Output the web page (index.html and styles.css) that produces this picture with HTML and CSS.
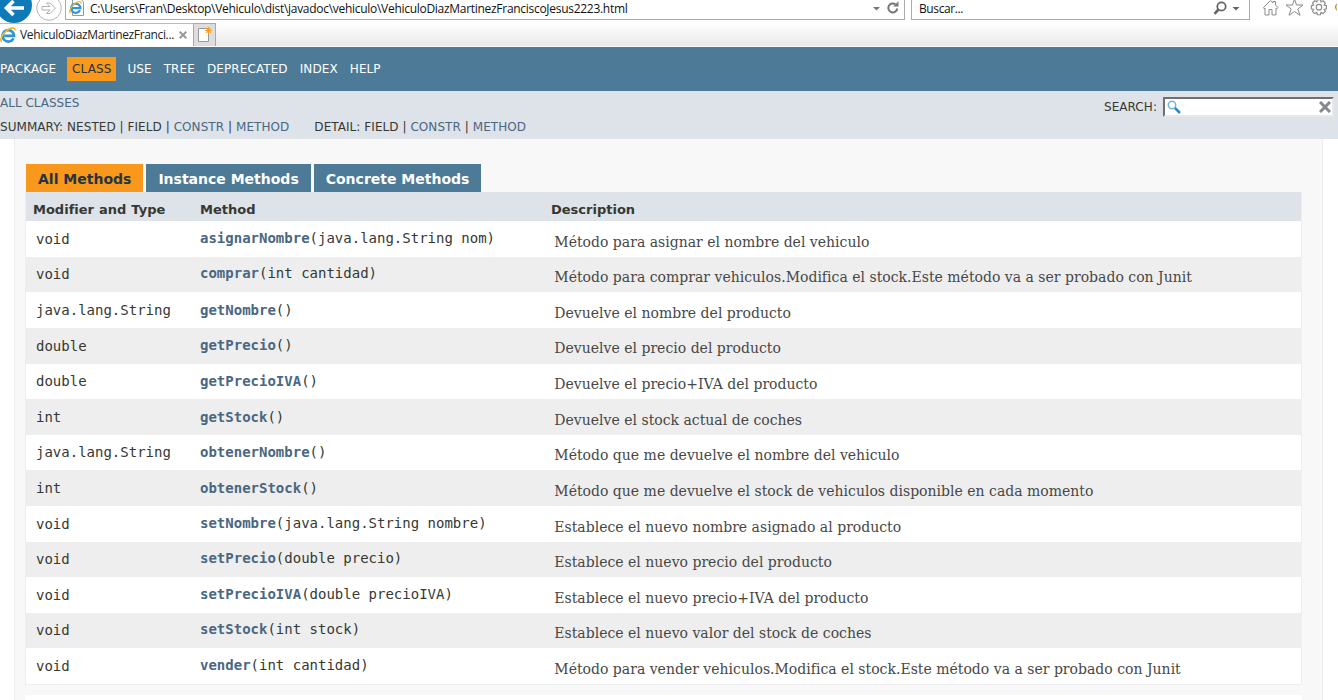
FILE: index.html
```
<!DOCTYPE html>
<html lang="es">
<head>
<meta charset="utf-8">
<title>VehiculoDiazMartinezFranciscoJesus2223</title>
<link rel="stylesheet" href="styles.css">
</head>
<body>
<svg class="defs" width="0" height="0">
  <symbol id="ie" viewBox="0 0 16 16">
    <path d="M13.5 11.200A5.700 5.700 0 1 1 14 8.800H4.200" fill="none" stroke="#2f94d8" stroke-width="2.7"/>
    <path d="M1.800 14.800C-.8 13 2.300 7 6.500 3.600 10.800.2 15.500-.3 14.800 3.500" fill="none" stroke="#f2b92d" stroke-width="1.600"/>
  </symbol>
</svg>
<div class="toolbar">
  <svg class="back" width="33" height="24" viewBox="0 0 33 24"><circle cx="14" cy="5" r="18" fill="#0e7bb8"/><path d="M24 8H7M13.500 1L6.500 8l7 7" fill="none" stroke="#fff" stroke-width="3.600"/></svg>
  <svg class="forward" width="28" height="22" viewBox="0 0 28 22"><circle cx="14" cy="8" r="12.300" fill="#fff" stroke="#b5b5b5"/><path d="M7 6.500h8L11.500 3h3.500l5.500 5-5.500 5.500h-3.500L15 10H7z" fill="#fff" stroke="#b0b0b0"/></svg>
  <div class="address">
    <svg width="18" height="18" viewBox="0 0 18 18"><path d="M4.500-1h8l3 3v13.500h-11z" fill="#fff" stroke="#999"/><use href="#ie" x="1" y="1" width="13" height="13"/></svg>
    <span class="url">C:\Users\Fran\Desktop\Vehiculo\dist\javadoc\vehiculo\VehiculoDiazMartinezFranciscoJesus2223.html</span>
    <svg class="reload" width="30" height="19" viewBox="0 0 30 19"><path d="M0 7h7L3.500 10.500z" fill="#777"/><path d="M22.500 4.300A4.500 4.500 0 1 0 24.300 8.500" fill="none" stroke="#777" stroke-width="2"/><path d="M20.500 1.200V6.500h5.300z" transform="rotate(-90 23 4)" fill="#777"/></svg>
  </div>
  <div class="searchbar"><span class="buscar">Buscar...</span>
    <svg width="28" height="19" viewBox="0 0 28 19"><circle cx="8.500" cy="6.500" r="4.200" fill="none" stroke="#666" stroke-width="1.800"/><path d="M5.500 9.500L1.500 13.800" stroke="#666" stroke-width="2.600"/><path d="M19.500 7h7l-3.500 3.500z" fill="#666"/></svg>
  </div>
  <svg class="tools" width="76" height="18" viewBox="0 0 76 18" fill="#fff" stroke="#8b8b8b"><path d="M2.500 7.500L9.500.5l2.500 2.300V1.500h2.500V5l2.500 2.500-1 1.200-1-.8v7h-4V9.500h-3v5.500h-4V8l-1 .7z"/><path d="M33.500-1l2 6h6.500l-5.200 4 2.200 6.300-5.500-3.800-5.500 3.800 2.200-6.300-5.200-4h6.500z"/><g transform="translate(-8.500 -.9) scale(1.150)"><path d="M56.400.6l2.700-.1.500 2 1.800-1 1.900 1.900-1 1.800 2 .5v2.700l-2 .5 1 1.800-1.900 1.900-1.800-1-.5 2h-2.700l-.5-2-1.800 1-1.900-1.900 1-1.800-2-.5V5.700l2-.5-1-1.800 1.900-1.900 1.800 1z"/><circle cx="57.800" cy="7" r="2.400"/></g><circle cx="79" cy="7" r="4.500" fill="#f8df63"/></svg>
</div>
<div class="tabbar">
  <div class="tab"><svg width="16" height="16"><use href="#ie" width="16" height="16"/></svg><span class="tabtitle">VehiculoDiazMartinezFranci...</span><svg class="close" width="8" height="8" viewBox="0 0 8 8"><path d="M.7.7l6.600 6.600M7.300.7L.7 7.300" stroke="#999" stroke-width="2"/></svg></div>
  <div class="newtab"><svg width="21" height="23" viewBox="0 0 21 23"><path d="M4.500 4.500h10v13h-10z" fill="#fff" stroke="#999"/><path d="M14.500 3v7M11 6.500h7M12.200 4.200l4.600 4.600M16.800 4.200l-4.600 4.600" stroke="#f6a027" stroke-width="1.200"/></svg></div>
</div>
<nav class="topnav"><span>PACKAGE</span><span class="current">CLASS</span><span>USE</span><span>TREE</span><span>DEPRECATED</span><span>INDEX</span><span>HELP</span></nav>
<div class="subnav">
  <div class="links">
    <div class="all"><a>ALL CLASSES</a></div>
    <div class="lists"><span class="summary">SUMMARY: NESTED | FIELD | <a>CONSTR</a> | <a>METHOD</a></span><span>DETAIL: FIELD | <a>CONSTR</a> | <a>METHOD</a></span></div>
  </div>
  <div class="search"><span>SEARCH:</span>
    <div class="field"><svg width="14" height="14" viewBox="0 0 14 14"><circle cx="5" cy="5" r="3.700" fill="#fff" stroke="#6fb7dc" stroke-width="1.500"/><path d="M8 8l5 5" stroke="#2589c5" stroke-width="2.500"/></svg><svg width="12" height="12" viewBox="0 0 12 12"><path d="M1 1l10 10M11 1L1 11" stroke="#828a90" stroke-width="3"/></svg></div>
  </div>
</div>
<main class="content">
  <div class="filters"><span class="active">All Methods</span><span>Instance Methods</span><span>Concrete Methods</span></div>
  <div class="table">
    <div class="head"><span>Modifier and Type</span><span>Method</span><span>Description</span></div>
    <div class="row"><code>void</code><code><b>asignarNombre</b>(java.lang.String nom)</code><p>Método para asignar el nombre del vehiculo</p></div>
    <div class="row"><code>void</code><code><b>comprar</b>(int cantidad)</code><p>Método para comprar vehiculos.Modifica el stock.Este método va a ser probado con Junit</p></div>
    <div class="row"><code>java.lang.String</code><code><b>getNombre</b>()</code><p>Devuelve el nombre del producto</p></div>
    <div class="row"><code>double</code><code><b>getPrecio</b>()</code><p>Devuelve el precio del producto</p></div>
    <div class="row"><code>double</code><code><b>getPrecioIVA</b>()</code><p>Devuelve el precio+IVA del producto</p></div>
    <div class="row"><code>int</code><code><b>getStock</b>()</code><p>Devuelve el stock actual de coches</p></div>
    <div class="row"><code>java.lang.String</code><code><b>obtenerNombre</b>()</code><p>Método que me devuelve el nombre del vehiculo</p></div>
    <div class="row"><code>int</code><code><b>obtenerStock</b>()</code><p>Método que me devuelve el stock de vehiculos disponible en cada momento</p></div>
    <div class="row"><code>void</code><code><b>setNombre</b>(java.lang.String nombre)</code><p>Establece el nuevo nombre asignado al producto</p></div>
    <div class="row"><code>void</code><code><b>setPrecio</b>(double precio)</code><p>Establece el nuevo precio del producto</p></div>
    <div class="row"><code>void</code><code><b>setPrecioIVA</b>(double precioIVA)</code><p>Establece el nuevo precio+IVA del producto</p></div>
    <div class="row"><code>void</code><code><b>setStock</b>(int stock)</code><p>Establece el nuevo valor del stock de coches</p></div>
    <div class="row"><code>void</code><code><b>vender</b>(int cantidad)</code><p>Método para vender vehiculos.Modifica el stock.Este método va a ser probado con Junit</p></div>
  </div>
  <div class="nextblock"></div>
</main>
</body>
</html>
```

FILE: styles.css
```
* { box-sizing: border-box; }
body { margin: 0; width: 1338px; height: 700px; overflow: hidden; background: #fff; color: #353833; font: 12px/16px "DejaVu Sans", sans-serif; display: flex; flex-direction: column; }
svg { display: block; flex: none; }
.defs { position: absolute; }
.toolbar { height: 23px; display: flex; flex: none; align-items: flex-start; font-family: "Open Sans", "Noto Sans", sans-serif; color: #111; z-index: 1; }
.forward { margin-left: 2px; }
.address { margin-left: 2px; width: 840px; height: 20px; border: 1px solid #aaa; border-top: 0; display: flex; background: #fff; }
.address > svg:first-child { margin-left: 2px; }
.url { margin-left: 4px; width: 783px; white-space: nowrap; letter-spacing: -0.288px; line-height: 17px; }
.searchbar { margin-left: 6px; width: 339px; height: 20px; border: 1px solid #aaa; border-top: 0; display: flex; justify-content: space-between; padding: 0 8px 0 7px; }
.buscar { line-height: 17px; letter-spacing: -0.4px; }
.tools { margin-left: 11px; }
.tabbar { height: 24px; flex: none; display: flex; background: linear-gradient(#fff, #e9e9e9); font-family: "Open Sans", "Noto Sans", sans-serif; color: #222; border-bottom: 1px solid #fafafa; }
.tab { width: 193px; display: flex; align-items: center; background: #fff; border-top: 1px solid #bbb; }
.tabtitle { margin-left: 4px; width: 159px; white-space: nowrap; letter-spacing: -0.36px; }
.newtab { width: 23px; background: #ddd; border: 1px solid #aaa; border-bottom: 0; }
.topnav { height: 44px; flex: none; background: #4d7a97; color: #fff; display: flex; align-items: center; gap: 12px; letter-spacing: 0.1px; }
.topnav .current { background: #f8981d; color: #253441; padding: 4px 5px; margin: 0 -1px; height: 24px; }
.subnav { height: 48px; flex: none; background: #dee3e9; display: flex; justify-content: space-between; }
a { color: #4a6782; }
.all { padding-top: 4px; height: 28px; }
.lists { display: flex; gap: 25px; white-space: nowrap; letter-spacing: 0.06px; }
.search { display: flex; gap: 6px; padding: 5px 4px 0 0; line-height: 22px; letter-spacing: 0.06px; }
.field { width: 171px; height: 20px; margin-top: 0.6px; background: #fff; border: 2px solid #707070; border-right-color: #e8e8e8; border-bottom-color: #e8e8e8; display: flex; justify-content: space-between; align-items: center; padding: 0 1px 0 2px; }
.content { margin: 0 15px 0 14px; height: 561px; background: #f8f8f8; border: solid #ededed; border-width: 0 1px; padding: 25px 20px 0 10px; }
.filters { display: flex; gap: 3px; height: 28px; padding-left: 1px; font-weight: bold; font-size: 14px; line-height: 30px; color: #fff; }
.filters span { background: #4d7a97; padding: 0 12px; }
.filters .active { background: #f8981d; color: #253441; }
.table { border: 1px solid #eee; border-top: 0; height: 493px; }
.head, .row { display: grid; grid-template-columns: 167px 351px 1fr; padding-left: 7px; }
.head { background: #dee3e9; height: 29.08px; font-size: 13px; font-weight: bold; line-height: 35px; word-spacing: 0.5px; }
.row { height: 35.615px; background: #fff; }
.row:nth-child(odd) { background: #eee; }
code { font: 14px/16px "DejaVu Sans Mono", monospace; padding-top: 9.5px; white-space: pre; }
.row:nth-child(-n+3) code, .row:nth-child(n+11) code { padding-top: 8.6px; }
.row code:first-child { padding: 9.7px 0 0 3px; }
b { color: #4a6782; }
p { margin: 0; padding: 12.55px 0 0 3.3px; font: 14px/17px "DejaVu Serif", serif; color: #474747; white-space: nowrap; letter-spacing: 0.008px; }
.nextblock { margin-top: 10px; height: 6px; background: #fff; }
```
